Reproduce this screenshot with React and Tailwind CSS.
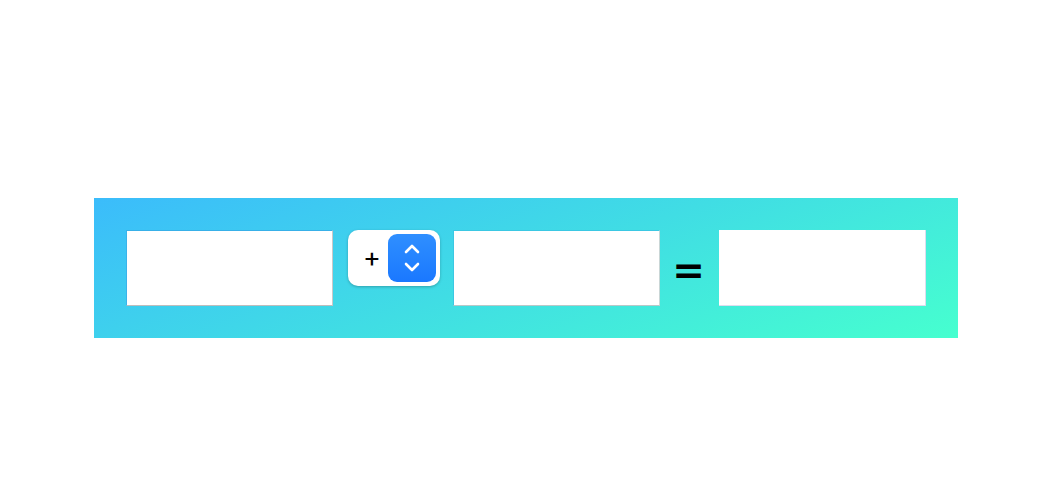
export default function App() {
  return (
    <div className="w-[1046px] h-[490px] bg-white flex items-start justify-start" style={{ fontFamily: '"Liberation Sans", Arial, sans-serif' }}>
      <div className="mt-[198px] ml-[94px] w-[864px] h-[140px] p-8 flex items-start bg-[linear-gradient(160deg,#3bbcfb_0%,#40dde4_50%,#46ffcf_100%)]">
        <div className="w-[207px] h-[76px] bg-white border border-t-[#38b0e8] border-l-[#3ab3ea] border-r-[#c9c9c9] border-b-[#bdbdbd] shrink-0" />
        <div className="ml-[15px] w-[92px] h-[56px] bg-white rounded-[10px] shadow-[0_1px_3px_rgba(0,0,0,0.25)] flex items-center shrink-0 pr-1">
          <span className="w-[40px] text-center text-[27px] font-normal leading-none text-black pl-[8px] -mt-[1px] font-['Inter',sans-serif]">+</span>
          <div className="w-[48px] h-[48px] rounded-[9px] bg-[linear-gradient(180deg,#2f8fff,#1a78ff)] flex items-center justify-center">
            <svg width="20" height="32" viewBox="0 0 20 32" fill="none" stroke="white" strokeWidth="2.6" strokeLinecap="round" strokeLinejoin="round">
              <path d="M4 10 L10 4 L16 10" />
              <path d="M4 22 L10 28 L16 22" />
            </svg>
          </div>
        </div>
        <div className="ml-[13px] w-[207px] h-[76px] bg-white border border-t-[#3bc8e3] border-l-[#3bc8e3] border-r-[#c9d6d6] border-b-[#b8c8c8] shrink-0" />
        <div className="ml-[16px] w-[25px] h-[76px] flex items-center justify-center shrink-0 pt-[5px]">
          <span className="text-[39px] font-bold leading-none text-black font-['DejaVu_Sans',sans-serif]">=</span>
        </div>
        <div className="ml-[18px] w-[207px] h-[76px] bg-white border-b border-r border-b-[#dde] border-r-[#dde] shrink-0" />
      </div>
    </div>
  );
}
